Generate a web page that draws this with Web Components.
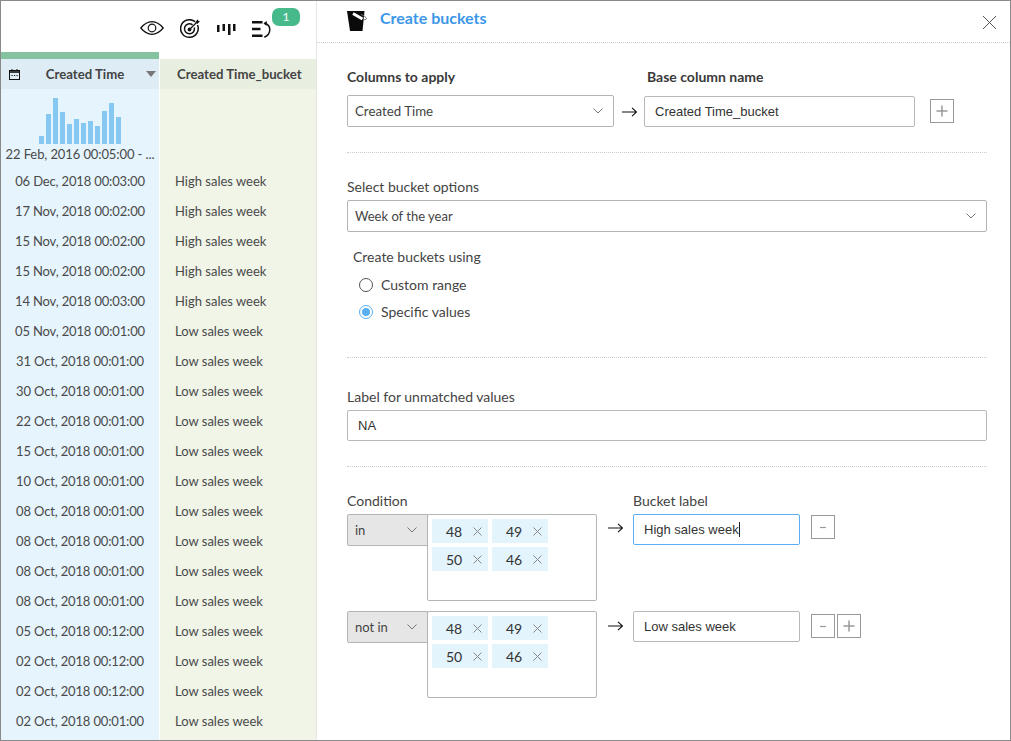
<!DOCTYPE html>
<html>
<head>
<meta charset="utf-8">
<title>Create buckets</title>
<style>
  html, body { margin: 0; padding: 0; background: #fff; }
  body { font-family: Lato, "Liberation Sans", sans-serif; color: #444; }
</style>
</head>
<body>
<bucket-app></bucket-app>

<script>
const CHEVRON = `<svg width="10" height="6" viewBox="0 0 10 6" fill="none" stroke="#777" stroke-width="1"><path d="M.5.5 5 5 9.5.5"/></svg>`
const ARROW = `<svg width="15" height="10" viewBox="0 0 15 10" fill="none" stroke="#111" stroke-width="1.1" style="display:block"><path d="M0 5h14.500M10 .8 14.500 5 10 9.200"/></svg>`

class ToolIcons extends HTMLElement {
  constructor () {
    super()
    this.attachShadow({ mode: 'open' }).innerHTML = `
      <style>
        :host { display: flex; height: 51px; box-sizing: border-box; padding: 18px 0 0 139px; position: relative; }
        svg { display: block; flex: none; }
        .eye { margin-top: 2px; }
        .target { margin-left: 16px; }
        .bars { margin: 4px 0 0 16px; }
        .undo { margin: 2px 0 0 16px; }
        .badge {
          position: absolute; left: 271px; top: 7px; width: 28px; height: 18px; border-radius: 7px;
          background: #46ba8b; color: #fff; font-size: 12px; line-height: 18px; text-align: center;
        }
      </style>
      <svg class="eye" width="24" height="14" viewBox="0 0 24 14" fill="none" stroke="#111" stroke-width="1.200">
        <path d="M.8 7C4.500 2.500 8.300.7 12 .7s7.500 1.800 11.200 6.300C19.500 11.500 15.700 13.300 12 13.300S4.500 11.500.8 7z"/>
        <circle cx="12" cy="7" r="3.800"/>
      </svg>
      <svg class="target" width="20" height="20" viewBox="0 0 20 20" fill="none" stroke="#111" stroke-width="1.500">
        <path d="M15 2.700A8.800 8.800 0 1 0 17.500 6"/>
        <path d="M12.500 5.800A5 5 0 1 0 14.300 8.500"/>
        <circle cx="9.500" cy="10.500" r="1.900" fill="#111" stroke="none"/>
        <path d="M9.500 10.500 17 3" stroke-width="1.200"/>
        <path d="M15.300 3 18 .2l.3 1.700 1.700.3-2.700 2.800z" fill="#111" stroke="none"/>
      </svg>
      <svg class="bars" width="20" height="13" viewBox="0 0 20 13" fill="#111">
        <rect x="1" y="2" width="2.500" height="7"/>
        <rect x="6.500" y="1" width="2.500" height="7"/>
        <rect x="12" y="1" width="2.500" height="11"/>
        <rect x="17" y="1" width="2.500" height="7"/>
      </svg>
      <svg class="undo" width="19" height="17" viewBox="0 0 19 17" fill="none" stroke="#111">
        <path d="M0 1.300h10.500M0 8h8.500M0 14.700h10.500" stroke-width="2.500"/>
        <path d="M12.500 2.200c3.500 1 5.300 3.200 5.300 6.300 0 3.400-2 6.300-5.500 7.800" stroke-width="1.500"/>
        <path d="M15 0 11.500 2.200 14.500 5z" fill="#111" stroke="none"/>
      </svg>
      <span class="badge">1</span>
    `
  }
}
customElements.define('tool-icons', ToolIcons)

class DataTable extends HTMLElement {
  constructor () {
    super()
    const heights = [8, 30, 46, 32, 20, 25, 21, 23, 18, 33, 41, 27]
    const rows = [
      ['06 Dec, 2018 00:03:00', 'High sales week'],
      ['17 Nov, 2018 00:02:00', 'High sales week'],
      ['15 Nov, 2018 00:02:00', 'High sales week'],
      ['15 Nov, 2018 00:02:00', 'High sales week'],
      ['14 Nov, 2018 00:03:00', 'High sales week'],
      ['05 Nov, 2018 00:01:00', 'Low sales week'],
      ['31 Oct, 2018 00:01:00', 'Low sales week'],
      ['30 Oct, 2018 00:01:00', 'Low sales week'],
      ['22 Oct, 2018 00:01:00', 'Low sales week'],
      ['15 Oct, 2018 00:01:00', 'Low sales week'],
      ['10 Oct, 2018 00:01:00', 'Low sales week'],
      ['08 Oct, 2018 00:01:00', 'Low sales week'],
      ['08 Oct, 2018 00:01:00', 'Low sales week'],
      ['08 Oct, 2018 00:01:00', 'Low sales week'],
      ['08 Oct, 2018 00:01:00', 'Low sales week'],
      ['05 Oct, 2018 00:12:00', 'Low sales week'],
      ['02 Oct, 2018 00:12:00', 'Low sales week'],
      ['02 Oct, 2018 00:12:00', 'Low sales week'],
      ['02 Oct, 2018 00:01:00', 'Low sales week'],
      ['', '']
    ]
    this.attachShadow({ mode: 'open' }).innerHTML = `
      <style>
        :host { display: grid; grid-template-columns: 158px 156px; column-gap: 1px; font-size: 13px; color: #4a4a4a; }
        .accent { height: 7px; background: #84c2a0; grid-column: 1; }
        .spacer { height: 7px; }
        .head { height: 30px; display: flex; align-items: center; font-weight: 700; font-size: 13.200px; color: #444; white-space: nowrap; }
        .head.a { background: #deecf5; padding: 0 3px 0 8px; position: relative; }
        .head.a span { flex: 1; text-align: center; padding-left: 4px; }
        .head.b { background: #e8eee0; padding-left: 17px; }
        .caret { width: 0; height: 0; border: 5px solid transparent; border-top: 6px solid #777; border-bottom: 0; }
        .summary { height: 77px; }
        .summary.a { background: #e5f4fd; display: flex; flex-direction: column; align-items: center; }
        .summary.b { background: #f0f5e8; }
        .chart { display: flex; align-items: flex-end; gap: 2px; height: 55px; }
        .chart i { display: block; width: 5px; background: #85c9f3; }
        .range { line-height: 20px; white-space: nowrap; letter-spacing: -.1px; }
        .cell { height: 30px; line-height: 30px; white-space: nowrap; overflow: hidden; }
        .cell.a { background: #e5f4fd; text-align: center; letter-spacing: -.15px; }
        .cell.b { background: #f0f5e8; padding-left: 15px; }
      </style>
      <div class="accent"></div><div class="spacer"></div>
      <div class="head a">
        <svg width="11" height="11" viewBox="0 0 11 11" fill="none" stroke="#111"><rect x=".5" y="1.500" width="10" height="9"/><path d="M.5 3h10" stroke-width="1.600"/><path d="M3 0v2M8 0v2" /><path d="M2.500 6.500h1.200M5 6.500h1.200M7.500 6.500h1.200"/></svg>
        <span>Created Time</span>
        <div class="caret"></div>
      </div>
      <div class="head b">Created Time_bucket</div>
      <div class="summary a">
        <div class="chart">${heights.map(h => `<i style="height:${h}px"></i>`).join('')}</div>
        <div class="range">22 Feb, 2016 00:05:00 - ...</div>
      </div>
      <div class="summary b"></div>
      ${rows.map(r => `<div class="cell a">${r[0]}</div><div class="cell b">${r[1]}</div>`).join('')}
    `
  }
}
customElements.define('data-table', DataTable)

class FormSelect extends HTMLElement {
  constructor () {
    super()
    this.attachShadow({ mode: 'open' }).innerHTML = `
      <style>
        :host {
          display: flex; align-items: center; justify-content: space-between; box-sizing: border-box;
          height: 32px; padding: 0 10px 0 7px; background: #fff; border: 1px solid #b4b4b4; border-radius: 2px;
          font-size: 13.300px; color: #444; flex: none;
        }
        :host([muted]) { background: #e6e6e6; border-radius: 2px 0 0 2px; font-size: 13px; }
        svg { display: block; }
      </style>
      <slot></slot>${CHEVRON}
    `
  }
}
customElements.define('form-select', FormSelect)

class TextField extends HTMLElement {
  constructor () {
    super()
    this.attachShadow({ mode: 'open' }).innerHTML = `
      <style>
        :host {
          display: flex; align-items: center; box-sizing: border-box; height: 31px; padding: 0 10px;
          background: #fff; border: 1px solid #b8b8b8; border-radius: 2px; flex: none;
          font: 13px/1 "Liberation Sans", Arial, sans-serif; color: #333;
        }
        :host([focused]) { border-color: #5aaef5; }
        .caret { display: none; width: 1px; height: 15px; background: #222; }
        :host([focused]) .caret { display: block; }
      </style>
      <slot></slot><span class="caret"></span>
    `
  }
}
customElements.define('text-field', TextField)

class SquareButton extends HTMLElement {
  constructor () {
    super()
    const minus = this.getAttribute('kind') === 'minus'
    this.attachShadow({ mode: 'open' }).innerHTML = `
      <style>
        :host {
          display: flex; align-items: center; justify-content: center; box-sizing: border-box;
          width: 24px; height: 24px; border: 1px solid #999; flex: none; background: #fff;
        }
        svg { display: block; }
      </style>
      <svg width="16" height="16" viewBox="0 0 16 16" fill="none" stroke="#999" stroke-width="${minus ? 1.2 : 1.5}"><path d="${minus ? 'M5 8.500h6' : 'M8 2.500v11M2.500 8h11'}"/></svg>
    `
  }
}
customElements.define('square-button', SquareButton)

class RadioOption extends HTMLElement {
  constructor () {
    super()
    this.attachShadow({ mode: 'open' }).innerHTML = `
      <style>
        :host { display: flex; align-items: center; gap: 8px; height: 27px; font-size: 14px; color: #444; }
        .dot { box-sizing: border-box; width: 14px; height: 14px; border-radius: 50%; border: 1px solid #555; background: #fff; position: relative; flex: none; }
        :host([checked]) .dot { border-color: #5aaef5; }
        :host([checked]) .dot::after { content: ""; position: absolute; left: 2px; top: 2px; width: 8px; height: 8px; border-radius: 50%; background: #5aaef5; }
      </style>
      <span class="dot"></span><slot></slot>
    `
  }
}
customElements.define('radio-option', RadioOption)

class TagBox extends HTMLElement {
  constructor () {
    super()
    const values = this.getAttribute('values').split(',')
    this.attachShadow({ mode: 'open' }).innerHTML = `
      <style>
        :host {
          display: grid; grid-template-columns: 56px 56px; grid-auto-rows: 24px; gap: 4px; align-content: start;
          box-sizing: border-box; width: 170px; height: 87px; padding: 4px 4px 0 4px;
          background: #fff; border: 1px solid #b4b4b4; border-radius: 2px; flex: none;
        }
        .tag { display: flex; align-items: center; background: #e3f4fc; color: #333; font-size: 14px; padding-left: 14px; box-sizing: border-box; }
        .tag svg { margin-left: 11px; display: block; }
      </style>
      ${values.map(v => `
        <div class="tag">${v}
          <svg width="9" height="9" viewBox="0 0 9 9" stroke="#888" fill="none"><path d="M.5.5l8 8M8.500.5l-8 8"/></svg>
        </div>`).join('')}
    `
  }
}
customElements.define('tag-box', TagBox)

class ConditionRow extends HTMLElement {
  constructor () {
    super()
    const plus = this.hasAttribute('addable') ? '<square-button kind="plus" class="plus"></square-button>' : ''
    this.attachShadow({ mode: 'open' }).innerHTML = `
      <style>
        :host { display: flex; align-items: flex-start; }
        form-select { width: 81px; margin-right: -1px; }
        .arrow { margin: 9px 10px 0 11px; flex: none; display: block; }
        text-field { width: 167px; }
        .minus { margin: 1px 0 0 11px; }
        .plus { margin: 3px 0 0 2px; }
        .minus.low { margin-top: 3px; }
        .arrow.low { margin-top: 10px; }
      </style>
      <form-select muted>${this.getAttribute('op')}</form-select>
      <tag-box values="48,49,50,46"></tag-box>
      <span class="arrow ${plus ? 'low' : ''}">${ARROW}</span>
      <text-field ${this.hasAttribute('focused') ? 'focused' : ''}>${this.getAttribute('label')}</text-field>
      <square-button kind="minus" class="minus ${plus ? 'low' : ''}"></square-button>
      ${plus}
    `
  }
}
customElements.define('condition-row', ConditionRow)

class BucketForm extends HTMLElement {
  constructor () {
    super()
    this.attachShadow({ mode: 'open' }).innerHTML = `
      <style>
        :host { display: block; flex: 1; min-width: 0; font-size: 14px; color: #444; }
        .top { display: flex; align-items: flex-start; box-sizing: border-box; height: 42px; border-bottom: 1px dotted #ccc; position: relative; padding: 9px 0 0 30px; }
        .top h1 { margin: -1px 0 0 12px; font-size: 16px; line-height: 17px; font-weight: 700; color: #3d97e8; }
        .close { position: absolute; left: 665px; top: 14px; }
        .body { padding: 0 23px 0 30px; }
        .sec { border-bottom: 1px dotted #ccc; }
        .lbl { line-height: 20px; white-space: nowrap; }
        b.lbl { color: #3a3a3a; }
        .s1 { height: 110px; box-sizing: border-box; padding-top: 24px; }
        .row { display: flex; align-items: flex-start; }
        .labels { display: flex; margin-bottom: 8px; }
        .labels b { width: 300px; display: block; }
        .s1 form-select { width: 267px; }
        .s1 .arrow { margin: 12px 7px 0 8px; flex: none; display: block; }
        .s1 text-field { width: 271px; margin-top: 1px; }
        .s1 square-button { margin: 4px 0 0 15px; }
        .s2 { height: 205px; box-sizing: border-box; padding-top: 24px; }
        .s2 .lbl { margin-bottom: 3px; }
        .s2 form-select { font-size: 13px; }
        .using { margin: 15px 0 0 6px; }
        .opts { margin: 4px 0 0 12px; }
        .s3 { height: 109px; box-sizing: border-box; padding-top: 29px; }
        .s3 .lbl { margin-bottom: 3px; }
        .s3 text-field { width: 100%; }
        .s4 { padding-top: 24px; }
        .s4 .heads { display: flex; height: 23px; }
        .s4 .heads span:first-child { width: 286px; }
        .s4 condition-row + condition-row { margin-top: 10px; }
      </style>
      <div class="top">
        <svg width="21" height="21" viewBox="0 0 21 21">
          <path d="M0 1h17.500l-2 20H3z" fill="#0b0b0b"/>
          <path d="M6 3.500 15.500 9" stroke="#fff" stroke-width="3"/>
          <path d="M14 4.500c2.500 1 5 2.500 5.500 4-.3 1.200-2 1.500-3.500 1" stroke="#666" stroke-width="1" fill="none"/>
        </svg>
        <h1>Create buckets</h1>
        <svg class="close" width="15" height="15" viewBox="0 0 15 15" stroke="#555" fill="none"><path d="M1 1l13 13M14 1 1 14"/></svg>
      </div>
      <div class="body">
        <div class="sec s1">
          <div class="labels"><b class="lbl">Columns to apply</b><b class="lbl">Base column name</b></div>
          <div class="row">
            <form-select>Created Time</form-select>
            <span class="arrow">${ARROW}</span>
            <text-field>Created Time_bucket</text-field>
            <square-button kind="plus"></square-button>
          </div>
        </div>
        <div class="sec s2">
          <div class="lbl">Select bucket options</div>
          <form-select>Week of the year</form-select>
          <div class="lbl using">Create buckets using</div>
          <div class="opts">
            <radio-option>Custom range</radio-option>
            <radio-option checked>Specific values</radio-option>
          </div>
        </div>
        <div class="sec s3">
          <div class="lbl">Label for unmatched values</div>
          <text-field>NA</text-field>
        </div>
        <div class="s4">
          <div class="heads lbl"><span>Condition</span><span>Bucket label</span></div>
          <condition-row op="in" label="High sales week" focused></condition-row>
          <condition-row op="not in" label="Low sales week" addable></condition-row>
        </div>
      </div>
    `
  }
}
customElements.define('bucket-form', BucketForm)

class BucketApp extends HTMLElement {
  constructor () {
    super()
    this.attachShadow({ mode: 'open' }).innerHTML = `
      <style>
        :host {
          display: flex; box-sizing: border-box; width: 1011px; height: 741px; overflow: hidden;
          border: 1px solid #8a8a8a; background: #fff;
        }
        .left { width: 315px; flex: none; border-right: 1px solid #e6e6e6; overflow: hidden; }
      </style>
      <div class="left"><tool-icons></tool-icons><data-table></data-table></div>
      <bucket-form></bucket-form>
    `
  }
}
customElements.define('bucket-app', BucketApp)
</script>
</body>
</html>
